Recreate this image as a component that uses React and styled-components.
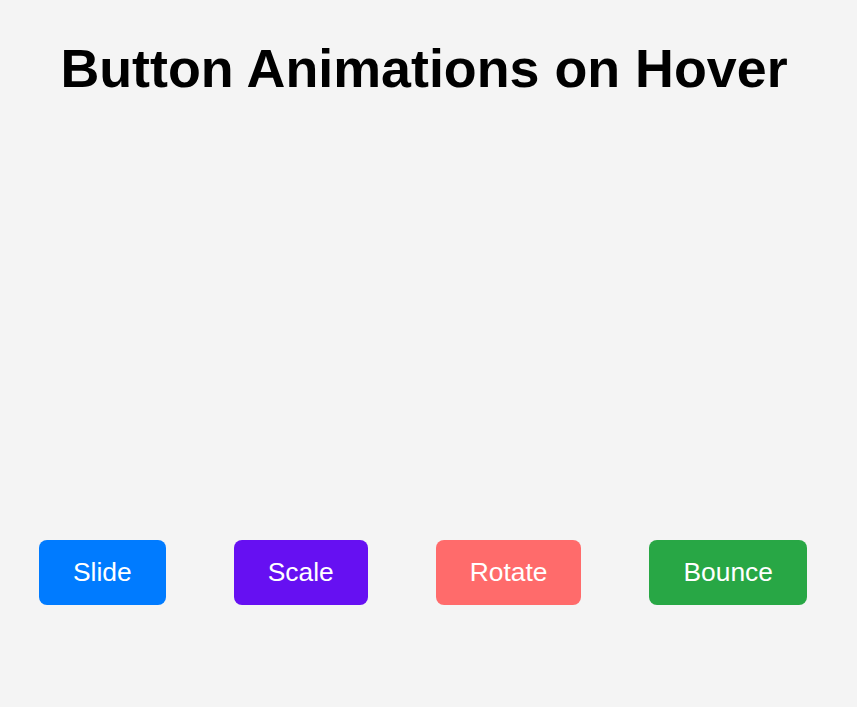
import React from 'react'
import styled, { createGlobalStyle } from "styled-components";

const GlobalStyle = createGlobalStyle`
  body {
    margin: 0;
    background: #f4f4f4;
    font-family: "Liberation Sans", Arial, sans-serif;
  }
`

const buttons = [
  { label: "Slide", color: "#007bff" },
  { label: "Scale", color: "#6610f2" },
  { label: "Rotate", color: "#ff6b6b" },
  { label: "Bounce", color: "#28a745" },
];

function App() {
  return (
    <Page>
      <GlobalStyle />
      <Title>Button Animations on Hover</Title>
      <Row>
        {buttons.map((b) => (
          <AnimButton key={b.label} $bg={b.color}>{b.label}</AnimButton>
        ))}
      </Row>
    </Page>
  )
}

export default App

const Page = styled.div`
  display: flex;
  flex-direction: column;
  min-height: 707px;
`

const Title = styled.h1`
  margin: 37px 0 0;
  text-align: center;
  font-size: 53.8px;
  font-weight: bold;
  color: #000;
  padding-right: 9px;
`

const Row = styled.div`
  display: flex;
  gap: 68px;
  padding-left: 39px;
  margin-top: 441px;
`

const AnimButton = styled.button`
  background-color: ${(p) => p.$bg};
  color: white;
  border: none;
  border-radius: 8px;
  padding: 17px 34px;
  font-family: "Liberation Sans", Arial, sans-serif;
  font-size: 26.4px;
  line-height: normal;
  cursor: pointer;
  transition: transform 0.3s;
`
